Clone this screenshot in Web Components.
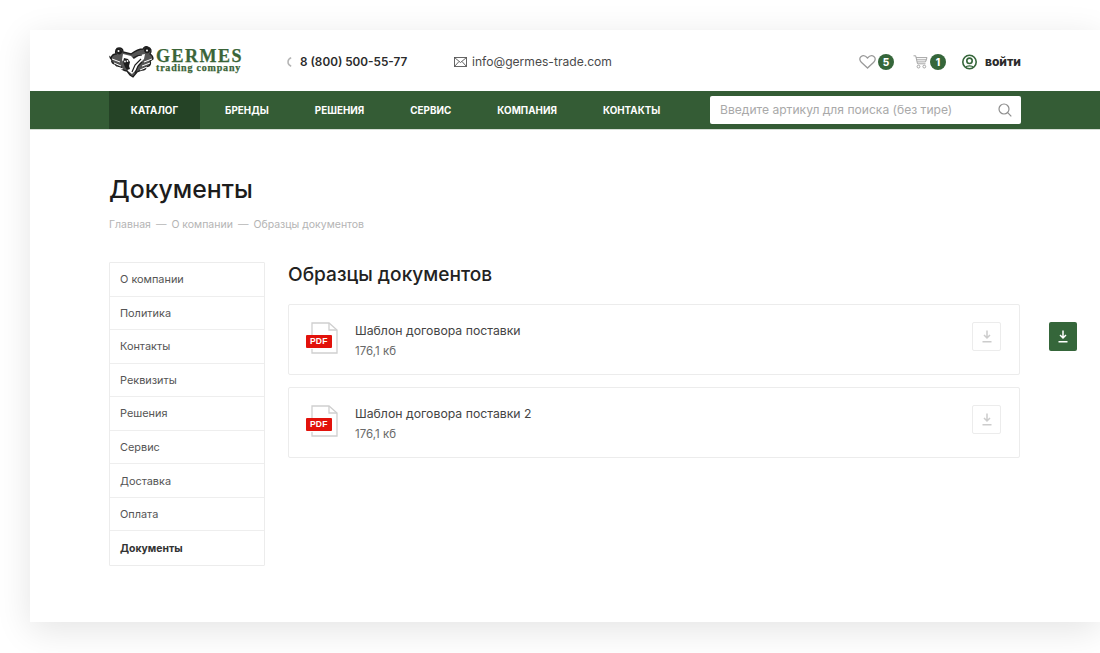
<!DOCTYPE html>
<html lang="ru"><head><meta charset="utf-8"><title>Документы</title>
<style>
html,body{margin:0;padding:0;background:#fff;height:653px;overflow:hidden}
body{font-family:Inter,"Noto Sans",sans-serif;color:#333}
</style></head><body>
<g-page>
  <g-header></g-header>
  <g-nav></g-nav>
  <g-main></g-main>
</g-page>
<script>
function def(name,html){customElements.define(name,class extends HTMLElement{constructor(){super();const s=this.attachShadow({mode:'open'});s.innerHTML=html;}})}

def('g-page',`<style>
:host{display:block;margin:30px 0 0 30px;width:1070px;height:592px;background:#fff;box-shadow:0 8px 34px rgba(0,0,0,.11);}
</style><slot></slot>`);

def('g-logo',`<style>
:host{display:flex;align-items:center;gap:1px;width:134px}
svg{flex:none}
.t{display:flex;flex-direction:column;font-family:"Liberation Serif",serif;font-weight:700;color:#3a6438;margin-top:-1px;-webkit-text-stroke:.25px #3a6438}
.a{font-size:18px;letter-spacing:1.500px;line-height:14px}
.b{font-size:10px;letter-spacing:.8px;line-height:10px}
</style>
<svg width="46" height="34" viewBox="0 0 46 34" fill="none" stroke="#1d1d1d">
<path d="M2 13C3 10 5 9 7 9 6 6 7 3 10 3c3 0 4 2 4 4l8 2c4-3 8-5 12-5 1-2 3-3 5-2 3 1 4 4 2 7 2 1 3 3 3 5l-3 2c1 2 1 3-1 5l-3 1c0 2-2 3-4 3l-5 2-4 5-3-2-3-4c-3 0-6-2-6-4-3 0-5-1-6-3-2 0-4-2-3-4-1-1-2-2-2-3z" fill="#555" stroke-width="1.300"/>
<path d="M14 9l8 2 3 3 6-4 5-1-1 5-5 5-3 6-4 4-4-3-3-6-3-5z" fill="#fff" stroke="none"/>
<g fill="#1d1d1d" stroke="none"><path d="M7 6c0-2 2-3 4-2 2 1 3 3 1 5-2 1-5 0-5-3z"/><path d="M35 5c0-3 3-4 5-2 2 1 1 5-1 5-2 1-4-1-4-3z"/><path d="M15 13l4 1 2 3-1 4 1 3-3 1-2-3-2-5z"/></g>
<g stroke="#fff" stroke-width="1"><path d="M3 14l8 3M5 18l7 3M8 22l6 2"/><path d="M43 14l-8 3M41 18l-8 3M38 22l-7 3"/></g>
<g stroke-width="1.200"><path d="M23 27l3-7 6-6M26 28l3-7 4-4M24 13c3-2 6-3 9-3"/></g>
<g fill="#fff" stroke="none"><circle cx="16" cy="16.500" r=".9"/><circle cx="18.500" cy="16" r=".9"/><circle cx="9.500" cy="6" r="1"/><circle cx="38" cy="5.500" r="1"/></g>
</svg>
<div class="t"><span class="a">GERMES</span><span class="b">trading company</span></div>`);

def('g-header',`<style>
:host{display:flex;align-items:center;height:61px;padding:2px 79px 0;box-sizing:border-box;width:1070px}
.ph{display:flex;align-items:center;margin-left:44px;width:167px;font-weight:600;color:#2b2b2b;font-size:11.750px}
.ph svg{margin-right:8px}
.ml{display:flex;align-items:center;gap:5px;color:#4a4a4a;font-size:12.100px}
.r{display:flex;align-items:center;margin-left:auto}
.ic{display:flex;align-items:center;gap:2px}
.bd{width:16px;height:16px;border-radius:50%;background:#35663a;color:#fff;font-size:10px;font-weight:800;display:flex;align-items:center;justify-content:center}
.lg{display:flex;align-items:center;gap:8px;font-weight:800;font-size:12px;color:#2b2b2b}
</style>
<g-logo></g-logo>
<div class="ph"><svg width="5" height="10" viewBox="0 0 5 10"><path d="M4.200 .8C2 1.600 1 3.200 1 5s1 3.400 3.200 4.200" fill="none" stroke="#b5b5b5" stroke-width="1.500"/></svg>8 (800) 500-55-77</div>
<div class="ml"><svg width="13" height="10" viewBox="0 0 13 10" fill="none" stroke="#555" stroke-width=".9"><rect x=".5" y=".5" width="12" height="9"/><path d="M.5 .5 6.500 5.500 12.500 .5M.5 9.500 5 4.500M12.500 9.500 8 4.500"/></svg>info@germes-trade.com</div>
<div class="r">
 <div class="ic" style="margin-right:19px"><svg width="17" height="14" viewBox="0 0 17 14" fill="none" stroke="#9a9a9a" stroke-width="1.300"><path d="M8.500 13 2.300 7.200C.4 5.400.4 3 1.900 1.700 3.700.3 6.500.7 8.500 3c2-2.300 4.800-2.700 6.600-1.300 1.500 1.300 1.500 3.700-.4 5.500z"/></svg><span class="bd">5</span></div>
 <div class="ic" style="margin-right:16px"><svg width="15" height="14" viewBox="0 0 15 14" fill="none" stroke="#a5a5a5" stroke-width="1"><path d="M.5 .8h2.200l1.800 8h8M3 2.600h11l-1.500 4.300H4.200M4 4.800h9.500"/><circle cx="5.500" cy="11.600" r="1.400"/><circle cx="11.300" cy="11.600" r="1.400"/></svg><span class="bd">1</span></div>
 <div class="lg"><svg width="15" height="16" viewBox="0 0 15 16" fill="none" stroke="#35663a" stroke-width="1.600"><circle cx="7.500" cy="8" r="6.700"/><circle cx="7.500" cy="6.800" r="2.700"/><path d="M3.800 13c1-1.600 6.400-1.600 7.400 0" stroke-width="1.300"/></svg>войти</div>
</div>`);

def('g-nav',`<style>
:host{display:flex;align-items:center;height:38px;background:#345c35;padding:0 79px;box-sizing:border-box;width:1070px;font-size:9.800px;letter-spacing:.05px;font-weight:700;color:#fff;text-transform:uppercase;box-shadow:0 1px 0 #d5ddd5}
a{display:flex;align-items:center;height:100%;padding:0 23px}
a.on{background:#254326;width:91px;box-sizing:border-box;justify-content:center;padding:0;margin-right:2px}
.s{margin-left:auto;width:311px;height:28px;margin-top:-1px;background:#fff;border-radius:2px;display:flex;align-items:center;justify-content:space-between;padding:0 9px 0 10px;box-sizing:border-box;color:#a9a9a9;font-size:12.100px;letter-spacing:0;font-weight:400;text-transform:none}
</style>
<a class="on">Каталог</a><a>Бренды</a><a>Решения</a><a>Сервис</a><a>Компания</a><a>Контакты</a>
<div class="s"><span>Введите артикул для поиска (без тире)</span><svg width="14" height="14" viewBox="0 0 14 14" fill="none" stroke="#8e8e8e" stroke-width="1.200"><circle cx="6" cy="6" r="5"/><path d="M9.700 9.700 13.300 13.300"/></svg></div>`);

def('g-main',`<style>
:host{display:block;padding:44px 80px 0 79px;width:1070px;box-sizing:border-box}
h1{margin:0;font-size:24.800px;line-height:32px;font-weight:500;color:#1c1c1c}
.bc{margin-top:13px;font-size:10.500px;line-height:14px;color:#b4b4b4;display:flex;gap:5px}
.row{display:flex;gap:23px;margin-top:30px;align-items:flex-start}
.c{flex:1;min-width:0}
h2{margin:0 0 18px;font-size:19.100px;line-height:24px;font-weight:500;color:#222}
</style>
<h1>Документы</h1>
<div class="bc"><span>Главная</span><span>—</span><span>О компании</span><span>—</span><span>Образцы документов</span></div>
<div class="row">
  <g-side>
   <g-side-item>О компании</g-side-item><g-side-item>Политика</g-side-item><g-side-item>Контакты</g-side-item><g-side-item>Реквизиты</g-side-item><g-side-item>Решения</g-side-item><g-side-item>Сервис</g-side-item><g-side-item>Доставка</g-side-item><g-side-item>Оплата</g-side-item><g-side-item active>Документы</g-side-item>
  </g-side>
  <div class="c"><h2>Образцы документов</h2>
    <g-doc name="Шаблон договора поставки" size="176,1 кб" hot></g-doc>
    <g-doc name="Шаблон договора поставки 2" size="176,1 кб"></g-doc>
  </div>
</div>`);

def('g-side',`<style>:host{display:block;width:156px;flex:none;border:1px solid #ececec;box-sizing:border-box;border-radius:1px}
::slotted(:not(:last-child)){border-bottom:1px solid #eeeeee}</style><slot></slot>`);

def('g-side-item',`<style>:host{display:flex;align-items:center;box-sizing:border-box;height:33.550px;padding-left:10px;font-size:10.900px;color:#555}
:host([active]){font-weight:700;font-size:10.400px;color:#333}</style><slot></slot>`);

customElements.define('g-doc',class extends HTMLElement{constructor(){super();this.attachShadow({mode:'open'})}
connectedCallback(){const dl=c=>`<svg width="10" height="13" viewBox="0 0 10 13" fill="none" stroke="${c}" stroke-width="1.500"><path d="M5 .5v7M2 5l3 3 3-3M.5 11.700h9"/></svg>`;
this.shadowRoot.innerHTML=`<style>
:host{display:flex;position:relative;align-items:center;height:71px;box-sizing:border-box;border:1px solid #ececec;border-radius:2px;padding:0 18px 0 17px;margin-bottom:12px}
.pdf{position:relative;width:33px;height:32px;flex:none;margin-right:16px;margin-top:-3px}
.tag{position:absolute;left:0;top:12.500px;width:25.500px;height:13px;background:#e2120b;border-radius:1px;color:#fff;font:700 8.500px/13px "Liberation Sans",sans-serif;text-align:center;letter-spacing:.2px}
.i{flex:1;padding-top:2px}.n{font-size:12.250px;line-height:16px;color:#444}.z{font-size:11.500px;line-height:16px;color:#6a6a6a;margin-top:4px}
.b{width:29px;height:29px;border:1px solid #ececec;border-radius:2px;box-sizing:border-box;display:flex;align-items:center;justify-content:center;margin-top:-6px}
.f{position:absolute;right:-58px;top:17px;width:28px;height:29px;background:#35663a;border-radius:2px;display:flex;align-items:center;justify-content:center}
</style>
<div class="pdf"><svg width="33" height="32" viewBox="0 0 33 32" fill="none" stroke="#cfcfcf" stroke-width="1.300" style="display:block"><path d="M6 13V1h17l8 7v23H6v-4"/><path d="M23 1v7h8"/></svg><span class="tag">PDF</span></div>
<div class="i"><div class="n">${this.getAttribute('name')}</div><div class="z">${this.getAttribute('size')}</div></div>
<div class="b">${dl('#cccccc')}</div>${this.hasAttribute('hot')?`<div class="f">${dl('#fff')}</div>`:''}`;}});
</script>
</body></html>
